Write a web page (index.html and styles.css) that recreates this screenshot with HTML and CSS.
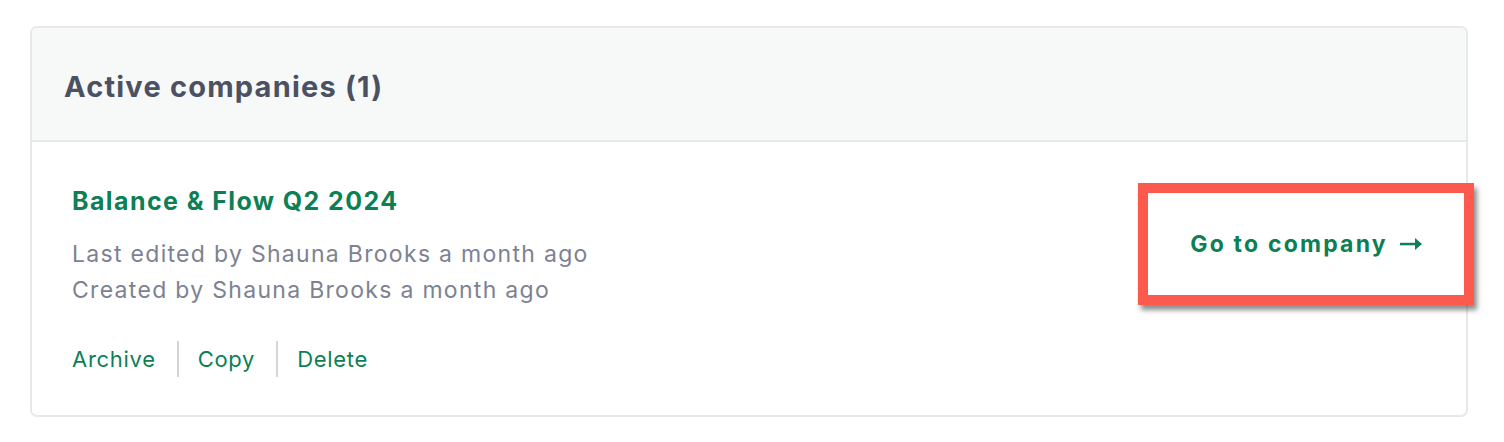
FILE: index.html
```html
<!DOCTYPE html>
<html>
<head>
<meta charset="utf-8">
<link rel="stylesheet" href="styles.css">
</head>
<body>
<div class="card">
  <div class="card-header">
    <h2 class="card-title">Active companies (1)</h2>
  </div>
  <div class="card-body">
    <div class="info">
      <a class="company-name">Balance &amp; Flow Q2 2024</a>
      <div class="meta">
        <div>Last edited by Shauna Brooks a month ago</div>
        <div>Created by Shauna Brooks a month ago</div>
      </div>
      <div class="actions">
        <a class="action">Archive</a>
        <span class="sep"></span>
        <a class="action">Copy</a>
        <span class="sep"></span>
        <a class="action">Delete</a>
      </div>
    </div>
    <a class="go-btn"><span>Go to company</span><svg class="arrow" width="22" height="14" viewBox="0 0 22 14"><rect x="0" y="5.8" width="17" height="2.5" fill="currentColor"/><polygon points="15,1 22,7 15,13" fill="currentColor"/></svg></a>
  </div>
</div>
</body>
</html>
```
FILE: styles.css
```css
html, body {
  margin: 0;
  padding: 0;
  background: #ffffff;
}
body {
  font-family: "Inter", "Noto Sans", sans-serif;
  padding: 26px 36px 0 30px;
}
.card {
  width: 1438px;
  height: 391px;
  box-sizing: border-box;
  border: 2px solid #e7e8e9;
  border-radius: 7px;
  display: flex;
  flex-direction: column;
}
.card-header {
  height: 114px;
  box-sizing: border-box;
  background: #f7f8f8;
  border-bottom: 2px solid #e7e8e9;
  border-radius: 5px 5px 0 0;
  padding: 4px 0 0 32px;
  display: flex;
  align-items: center;
}
.card-title {
  margin: 0;
  font-size: 29px;
  font-weight: 700;
  color: #4b5162;
  letter-spacing: 1.2px;
}
.card-body {
  flex: 1;
  display: flex;
  justify-content: space-between;
  padding: 0 2px 0 40px;
}
.info {
  display: flex;
  flex-direction: column;
  padding-top: 43px;
}
.company-name {
  font-size: 25px;
  font-weight: 700;
  color: #0d7f55;
  line-height: 32px;
  letter-spacing: 1.4px;
}
.meta {
  margin-top: 19px;
  font-size: 23px;
  line-height: 36px;
  color: #7c8291;
  letter-spacing: 1.3px;
}
.actions {
  margin-top: 33px;
  display: flex;
  align-items: center;
}
.action {
  font-size: 22px;
  color: #0d7f55;
  line-height: 36px;
  letter-spacing: 0.7px;
}
.sep {
  width: 2px;
  height: 36px;
  background: #d3d5d9;
  margin: 0 19px 0 21px;
}
.go-btn {
  position: relative;
  margin-top: 51px;
  width: 316px;
  height: 102px;
  display: flex;
  align-items: center;
  justify-content: center;
  font-size: 23px;
  font-weight: 700;
  color: #0d7f55;
  background: #fff;
  letter-spacing: 2.2px;
}
.arrow {
  margin-left: 12px;
  flex: none;
}
.go-btn::after {
  content: "";
  position: absolute;
  left: -10px;
  top: -10px;
  right: -10px;
  bottom: -10px;
  border: 10px solid #fd5a4e;
  box-shadow: 3px 5px 5px rgba(0, 0, 0, 0.45);
  pointer-events: none;
}
```
